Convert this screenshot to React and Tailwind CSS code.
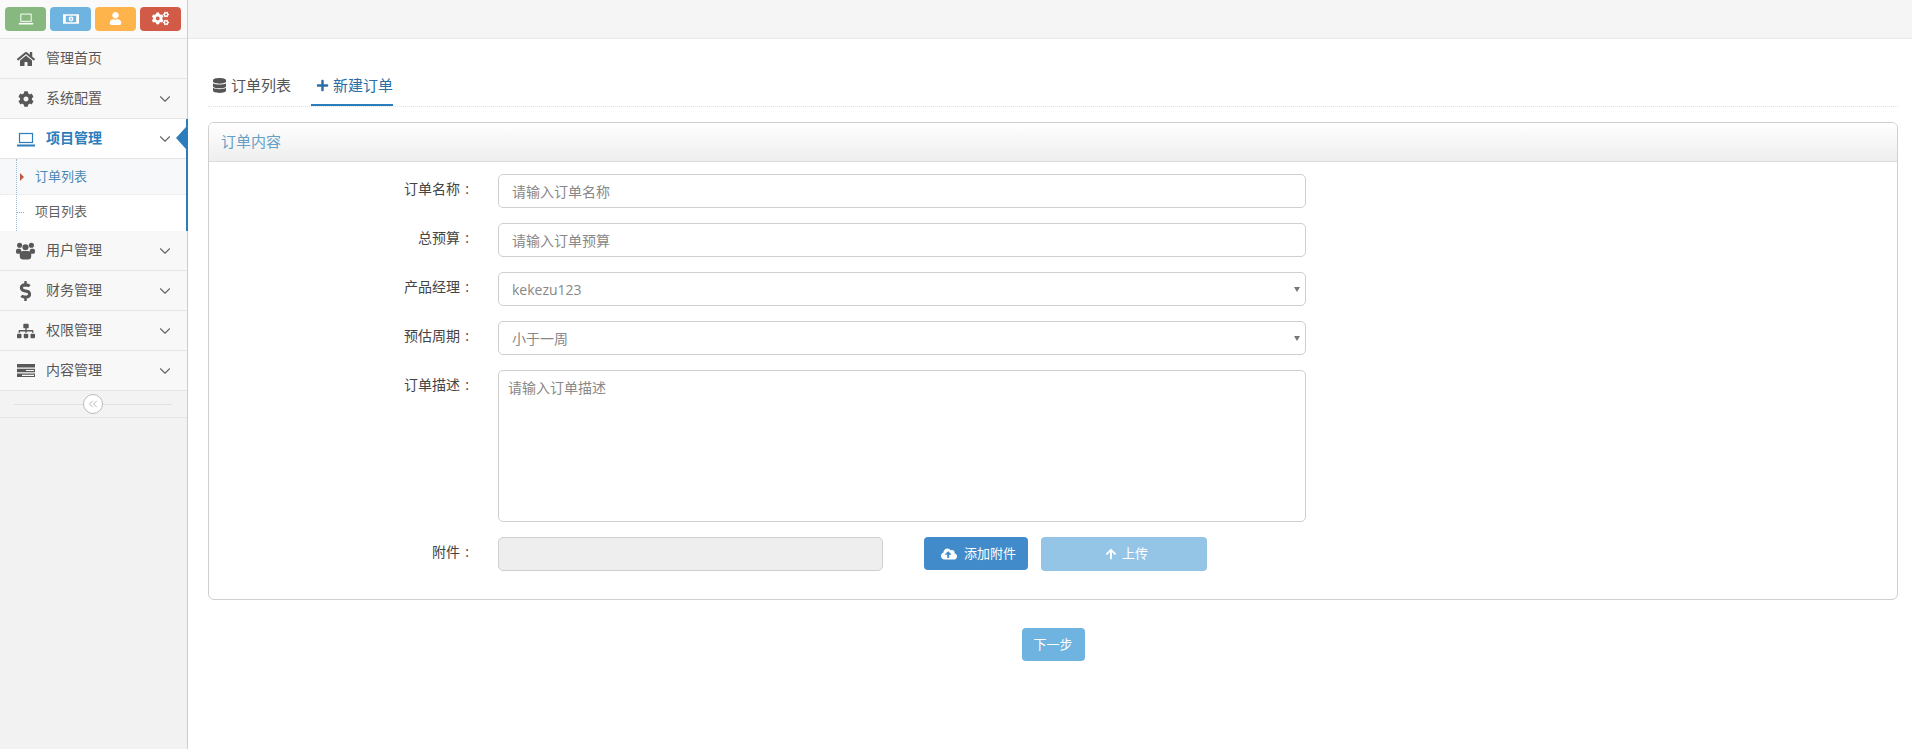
import React from 'react';
import { FaHome, FaCog, FaDollarSign, FaSitemap, FaUser, FaCogs, FaDatabase, FaPlus, FaCloudUploadAlt, FaArrowUp } from 'react-icons/fa';
import { ChevronDown, ChevronsLeft } from 'lucide-react';

const cjk = "font-['Open_Sans','Noto_Sans_CJK_SC',sans-serif]";

function LaptopIcon({ className }) {
  return (
    <svg viewBox="0 0 20 16" className={className} fill="none" stroke="currentColor">
      <rect x="3.5" y="2.5" width="13" height="9" strokeWidth="1.2" />
      <path d="M1 14.5h18" strokeWidth="2" />
    </svg>
  );
}

function MoneyIcon({ className }) {
  return (
    <svg viewBox="0 0 20 14" className={className} fill="currentColor">
      <path fillRule="evenodd" d="M0 1h20v12H0zM3.5 3v8h13V3zM10 4a3 3 0 1 1 0 6 3 3 0 0 1 0-6z" />
      <path d="M9.3 5.5h1.4v3H9.3z" fill="#6caad8" />
    </svg>
  );
}

function ListIcon({ className }) {
  return (
    <svg viewBox="0 0 18 13" className={className} fill="currentColor">
      <path fillRule="evenodd" d="M0 0h18v3.4H0zM0 4.8h18v3.4H0zM9 5.9v1.2h8V5.9zM0 9.6h18V13H0zM5 10.7v1.2h12v-1.2z" />
    </svg>
  );
}

function UsersIcon({ className }) {
  return (
    <svg viewBox="0 0 20 18" className={className} fill="currentColor">
      <circle cx="3.8" cy="3" r="2.7" />
      <circle cx="16.2" cy="3" r="2.7" />
      <circle cx="10" cy="5" r="3.2" />
      <rect x="0" y="6.5" width="5.5" height="5.5" rx="2" />
      <rect x="14.5" y="6.5" width="5.5" height="5.5" rx="2" />
      <rect x="4" y="9" width="12" height="9" rx="3.5" />
    </svg>
  );
}

const menuTop = [
  { label: '管理首页', icon: <FaHome className="w-[18px] h-[18px]" />, arrow: false },
  { label: '系统配置', icon: <FaCog className="w-[16px] h-[16px]" />, arrow: true },
];

const menuBottom = [
  { label: '用户管理', icon: <UsersIcon className="w-[19px] h-[18px]" /> },
  { label: '财务管理', icon: <FaDollarSign className="w-[20px] h-[20px]" /> },
  { label: '权限管理', icon: <FaSitemap className="w-[18px] h-[18px]" /> },
  { label: '内容管理', icon: <ListIcon className="w-[18px] h-[13px]" /> },
];

function MenuRow({ label, icon, arrow = true }) {
  return (
    <div className="h-[40px] flex items-center border-b border-[#e5e5e5] bg-[#f8f8f8] text-[#585858]">
      <span className="w-[46px] pl-[16px] flex justify-start">
        <span className="w-[19px] flex justify-center">{icon}</span>
      </span>
      <span className="text-[14px] pb-[2px]">{label}</span>
      {arrow && <ChevronDown className="ml-auto mr-[13px] w-[18px] h-[18px] text-[#666]" strokeWidth={1.5} />}
    </div>
  );
}

function Sidebar() {
  return (
    <aside className="w-[188px] shrink-0 bg-[#f2f2f2] border-r border-[#cccccc] min-h-screen">
      <div className="h-[39px] flex items-center gap-[4px] pl-[5px] pb-[1px] bg-[#fafafa] border-b border-[#e5e5e5]">
        <span className="w-[41px] h-[24px] rounded-[4px] bg-[#87b87f] text-white flex items-center justify-center"><LaptopIcon className="w-[16px] h-[13px]" /></span>
        <span className="w-[41px] h-[24px] rounded-[4px] bg-[#6fb3e0] text-white flex items-center justify-center"><MoneyIcon className="w-[16px] h-[12px]" /></span>
        <span className="w-[41px] h-[24px] rounded-[4px] bg-[#ffb44b] text-white flex items-center justify-center"><FaUser className="w-[13px] h-[13px]" /></span>
        <span className="w-[41px] h-[24px] rounded-[4px] bg-[#d15b47] text-white flex items-center justify-center"><FaCogs className="w-[17px] h-[17px]" /></span>
      </div>

      {menuTop.map((m) => <MenuRow key={m.label} {...m} />)}

      <div className="relative border-r-2 border-[#2b7dbc] mr-[-1px]">
        <div className="h-[40px] flex items-center border-b border-[#e5e5e5] bg-white text-[#2b7dbc] font-semibold">
          <span className="w-[46px] pl-[16px]"><LaptopIcon className="w-[20px] h-[16px]" /></span>
          <span className="text-[14px] pb-[2px]">项目管理</span>
          <ChevronDown className="ml-auto mr-[12px] w-[18px] h-[18px] text-[#666]" strokeWidth={1.5} />
        </div>
        <span className="absolute right-0 top-[8px] w-0 h-0 border-y-[11px] border-y-transparent border-r-[10px] border-r-[#2b7dbc]" />
        <div className="relative bg-white">
          <span className="absolute left-[16px] top-0 bottom-0 border-l border-dotted border-[#9dbdd6]" />
          <div className="h-[36px] pl-[35px] flex items-center bg-[#f6f8fa] border-b border-dotted border-[#e4e4e4] text-[13px] text-[#4b88b7]">
            <span className="absolute left-[20px] w-0 h-0 border-y-[4px] border-y-transparent border-l-[4px] border-l-[#c0584a]" />
            订单列表
          </div>
          <div className="h-[36px] pl-[35px] pb-[2px] flex items-center text-[13px] text-[#616161]">
            <span className="absolute left-[17px] w-[7px] border-t border-dotted border-[#9aa7b3]" />
            项目列表
          </div>
        </div>
      </div>

      <div>
        {menuBottom.map((m) => <MenuRow key={m.label} {...m} />)}
      </div>

      <div className="relative h-[27px] flex items-center border-b border-[#e5e5e5] bg-[#f3f3f3]">
        <span className="block mx-[14px] w-[158px] border-t border-[#e0e0e0]" />
        <span className="absolute left-[83px] top-[3px] w-[20px] h-[20px] rounded-full border border-[#bbbbbb] bg-white text-[#aaa] flex items-center justify-center">
          <ChevronsLeft className="w-[14px] h-[14px]" strokeWidth={1.5} />
        </span>
      </div>
    </aside>
  );
}

function Field({ label, children }) {
  return (
    <div className="flex items-start mb-[15px]">
      <label className="w-[265px] mr-[24px] pt-[5px] text-right text-[14px] leading-[20px] text-[#444]">
        {label}<span className="inline-block w-[14px] text-center">:</span>
      </label>
      {children}
    </div>
  );
}

const inputCls = "w-[808px] h-[34px] px-[13px] border border-[#cfcfcf] rounded-[5px] bg-white text-[14px] text-[#888] placeholder:text-[#888] outline-none";

function SelectField({ value }) {
  return (
    <div className="relative w-[808px]">
      <select defaultValue={value} className={`${inputCls} appearance-none`}>
        <option>{value}</option>
      </select>
      <span className="absolute right-[6px] top-[15px] w-0 h-0 border-x-[3px] border-x-transparent border-t-[5px] border-t-[#777]" />
    </div>
  );
}

export default function App() {
  return (
    <div className={`flex min-h-screen bg-white ${cjk}`}>
      <Sidebar />
      <main className="flex-1 min-w-0">
        <div className="h-[39px] bg-[#f5f5f5] border-b border-[#e8e8e8]" />
        <div className="pl-[20px] pr-[14px]">
          <div className="mt-[27px] h-[41px] flex items-start border-b border-dotted border-[#e0e0e0] text-[15px]">
            <div className="h-[40px] pl-[5px] pr-[20px] pt-[9px] flex items-start gap-[5px] text-[#555] leading-[20px]">
              <FaDatabase className="w-[13px] h-[15px] mt-[3px]" />
              订单列表
            </div>
            <div className="h-[40px] pl-[5px] pt-[9px] flex items-start gap-[4px] text-[#2b6ea5] leading-[20px] border-b-2 border-[#2b7dbc]">
              <FaPlus className="w-[13px] h-[13px] mt-[4px]" />
              新建订单
            </div>
          </div>

          <section className="mt-[15px] h-[478px] border border-[#cfcfcf] rounded-[6px] overflow-hidden">
            <div className="h-[39px] flex items-center pl-[12px] pb-[2px] border-b border-[#dcdcdc] bg-gradient-to-b from-[#ffffff] to-[#eeeeee] text-[15px] text-[#669fc7]">
              订单内容
            </div>
            <div className="pt-[12px]">
              <Field label="订单名称"><input className={inputCls} placeholder="请输入订单名称" /></Field>
              <Field label="总预算"><input className={inputCls} placeholder="请输入订单预算" /></Field>
              <Field label="产品经理"><SelectField value="kekezu123" /></Field>
              <Field label="预估周期"><SelectField value="小于一周" /></Field>
              <Field label="订单描述">
                <textarea className="w-[808px] h-[152px] px-[9px] py-[6px] border border-[#cfcfcf] rounded-[5px] text-[14px] placeholder:text-[#888] outline-none resize-none" placeholder="请输入订单描述" />
              </Field>
              <Field label="附件">
                <div className="w-[385px] h-[34px] border border-[#cfcfcf] rounded-[5px] bg-[#eeeeee]" />
                <button className="ml-[41px] w-[104px] h-[33px] pl-[17px] rounded-[4px] bg-[#428bca] text-white text-[13px] flex items-center gap-[7px]">
                  <FaCloudUploadAlt className="w-[16px] h-[16px]" />
                  添加附件
                </button>
                <button className="ml-[13px] w-[166px] h-[34px] pl-[64px] rounded-[4px] bg-[#95c5e6] text-white text-[13px] flex items-center gap-[5px]">
                  <FaArrowUp className="w-[12px] h-[12px]" />
                  上传
                </button>
              </Field>
            </div>
          </section>

          <div className="mt-[28px] flex justify-center">
            <button className="w-[63px] h-[33px] rounded-[4px] bg-[#6fb3e0] text-white text-[13px]">下一步</button>
          </div>
        </div>
      </main>
    </div>
  );
}
